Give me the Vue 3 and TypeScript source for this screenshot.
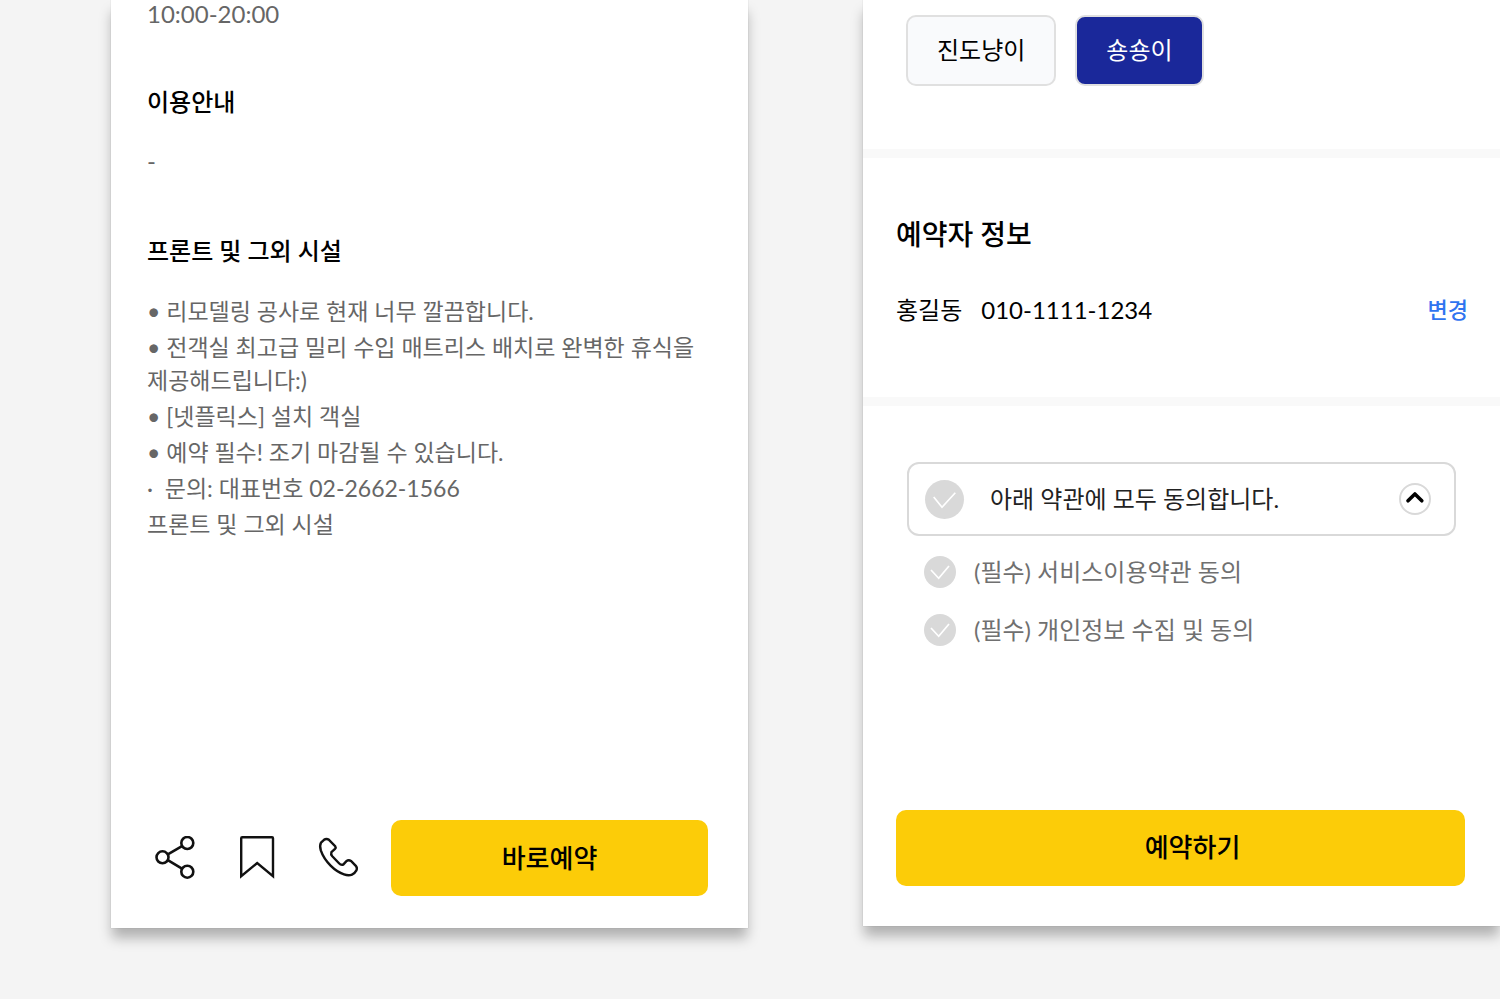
<script setup lang="ts">
import { ref } from 'vue'

interface Term {
  id: string
  label: string
}

const notices: string[] = [
  '• 리모델링 공사로 현재 너무 깔끔합니다.',
  '• 전객실 최고급 밀리 수입 매트리스 배치로 완벽한 휴식을 제공해드립니다:)',
  '• [넷플릭스] 설치 객실',
  '• 예약 필수! 조기 마감될 수 있습니다.',
  '·  문의: 대표번호 02-2662-1566',
  '프론트 및 그외 시설',
]

const pets: string[] = ['진도냥이', '숑숑이']
const selectedPet = ref('숑숑이')

const terms: Term[] = [
  { id: 'service', label: '(필수) 서비스이용약관 동의' },
  { id: 'privacy', label: '(필수) 개인정보 수집 및 동의' },
]
const agreed = ref<string[]>([])
const open = ref(true)

function toggleAll(event: Event) {
  agreed.value = (event.target as HTMLInputElement).checked ? terms.map((t) => t.id) : []
}
</script>

<template>
  <main class="page">
    <article class="card place">
      <p class="text">10:00-20:00</p>
      <h2 class="subtitle guide">이용안내</h2>
      <p class="text">-</p>
      <h2 class="subtitle front">프론트 및 그외 시설</h2>
      <ul class="notices">
        <li v-for="line in notices" :key="line">{{ line }}</li>
      </ul>
      <footer class="actions">
        <div class="icons">
          <button type="button" class="icon" aria-label="공유">
            <svg viewBox="0 0 44 44" stroke-width="2.6">
              <circle cx="9.5" cy="21.3" r="6" />
              <circle cx="34.3" cy="7" r="6" />
              <circle cx="34.3" cy="35.7" r="6" />
              <path d="M14.8 18.4 29 10.2M14.8 24.2 29 32.6" />
            </svg>
          </button>
          <button type="button" class="icon" aria-label="저장">
            <svg viewBox="0 0 44 44" stroke-width="2.4">
              <path d="M6.2 40.2V2.2Q6.2 1.2 7.2 1.2H37Q38 1.2 38 2.2V40.2L22.2 27Z" />
            </svg>
          </button>
          <button type="button" class="icon" aria-label="전화">
            <svg viewBox="0 0 44 44" stroke-width="2.4">
              <path d="M4 6.7 7 3.8Q9.4 2 12 3.8L18.2 10.2Q19.2 11.6 18 12.8L14.4 16.2Q13.6 18.4 15.3 20.3L22 27.2Q24 29.4 26.2 28.6L29.4 25.2Q31.6 23.2 34 25L38.8 29.8Q40.6 32 39.4 34.4 37.8 37.4 35 38.6 31.6 40 27 38.4 20 36 13.6 29.6 6.6 22.6 3.8 14.4 2.4 9.4 4 6.7Z" />
            </svg>
          </button>
        </div>
        <button type="button" class="primary">바로예약</button>
      </footer>
    </article>

    <article class="card booking">
      <div class="pets">
        <button
          v-for="pet in pets"
          :key="pet"
          type="button"
          class="pet"
          :class="{ selected: pet === selectedPet }"
          :aria-pressed="pet === selectedPet"
          @click="selectedPet = pet"
        >{{ pet }}</button>
      </div>
      <section class="guest">
        <h2 class="title">예약자 정보</h2>
        <div class="contact">
          <span>홍길동</span>
          <span>010-1111-1234</span>
          <button type="button" class="change">변경</button>
        </div>
      </section>
      <section class="terms">
        <div class="all">
          <label class="check large">
            <span class="mark">
              <input type="checkbox" :checked="agreed.length === terms.length" @change="toggleAll" />
              <svg viewBox="0 0 39 39" stroke-width="1.7"><path d="M8.7 17 17 27.3 30.3 12.7" /></svg>
            </span>
            <span>아래 약관에 모두 동의합니다.</span>
          </label>
          <button type="button" class="toggle" aria-label="약관 접기" :aria-expanded="open" @click="open = !open">
            <svg viewBox="0 0 28 28"><path d="M7 15.8 13.9 9 20.8 15.8" /></svg>
          </button>
        </div>
        <div v-show="open" class="list">
          <label v-for="term in terms" :key="term.id" class="check">
            <span class="mark">
              <input v-model="agreed" type="checkbox" :value="term.id" />
              <svg viewBox="0 0 32 32" stroke-width="1.7"><path d="M7 14 14.7 22.3 25 10" /></svg>
            </span>
            <span>{{ term.label }}</span>
          </label>
        </div>
      </section>
      <footer class="submit">
        <button type="button" class="primary">예약하기</button>
      </footer>
    </article>
  </main>
</template>

<style>
body {
  margin: 0;
  background: #f4f4f4;
}
</style>

<style scoped>
* {
  box-sizing: border-box;
}

.page {
  display: grid;
  grid-template-columns: 1fr 1fr;
  align-items: start;
  gap: 115px;
  min-height: 100vh;
  padding: 0 0 64px 111px;
  overflow: hidden;
  background: #f4f4f4;
  color: #000;
  font-family: Lato, "Noto Sans CJK KR", sans-serif;
  font-size: 24px;
  line-height: 33px;
}

button {
  padding: 0;
  border: 0;
  background: none;
  color: inherit;
  font: inherit;
  cursor: pointer;
}

h2,
p,
ul {
  margin: 0;
}

.card {
  min-width: 0;
  background: #fff;
  box-shadow: 0 0 1px rgba(0, 0, 0, 0.2), 0 11px 12px -1px rgba(0, 0, 0, 0.28);
}

.place {
  padding: 0 40px 32px 36px;
}

.text {
  color: #666;
  line-height: 28px;
}

.subtitle {
  font-size: 24px;
  font-weight: 500;
  line-height: 32px;
}

.guide {
  margin: 58px 0 29px;
}

.front {
  margin: 60px 0 28px;
}

.notices {
  display: grid;
  gap: 3px;
  padding: 0;
  color: #666;
  font-size: 23px;
  list-style: none;
}

.notices li {
  white-space: pre-wrap;
  word-break: keep-all;
}

.actions {
  display: flex;
  align-items: center;
  gap: 30px;
  margin-top: 279px;
}

.icons {
  display: flex;
  gap: 38px;
  padding-left: 6px;
}

.icon {
  width: 44px;
  height: 44px;
}

svg {
  display: block;
  width: 100%;
  height: 100%;
  fill: none;
  stroke: currentColor;
}

.icon svg {
  stroke: #111;
}

.primary {
  flex: 1;
  height: 76px;
  border-radius: 10px;
  background: #fccc08;
  font-size: 26px;
  font-weight: 500;
}

.booking {
  padding: 15px 0 40px;
}

.pets {
  display: flex;
  gap: 19px;
  padding: 0 43px 63px;
}

.pet {
  height: 71px;
  padding: 0 29px 2px;
  border: 2px solid #e0e0e0;
  border-radius: 10px;
  background: #f9fafc;
}

.pet.selected {
  background: #1a289a;
  color: #fff;
}

.guest {
  padding: 60px 32px 71px 33px;
  border: solid #f9f9f9;
  border-width: 9px 0;
}

.title {
  margin-bottom: 43px;
  font-size: 28px;
  font-weight: 500;
  line-height: 32px;
}

.contact {
  display: flex;
  gap: 19px;
}

.change {
  margin-left: auto;
  color: #2f74f0;
  font-size: 22px;
  font-weight: 500;
}

.terms {
  padding: 56px 44px 0;
}

.all {
  display: flex;
  align-items: center;
  justify-content: space-between;
  height: 74px;
  padding: 0 23px 0 16px;
  border: 2px solid #d9d9d9;
  border-radius: 12px;
}

.check {
  display: flex;
  align-items: center;
  gap: 18px;
  color: #707070;
  line-height: 32px;
}

.check.large {
  gap: 26px;
  color: #222;
}

.mark {
  display: grid;
  width: 32px;
  height: 32px;
}

.large .mark {
  width: 39px;
  height: 39px;
}

.mark > * {
  grid-area: 1 / 1;
}

.mark input {
  width: 100%;
  height: 100%;
  margin: 0;
  border-radius: 50%;
  background: #d9d9d9;
  appearance: none;
}

.mark input:checked {
  background: #1a289a;
}

.mark svg {
  position: relative;
  stroke: #fff;
  pointer-events: none;
}

.toggle {
  width: 32px;
  height: 32px;
  border: 2px solid #d9d9d9;
  border-radius: 50%;
}

.toggle svg {
  stroke: #000;
  stroke-width: 3.6;
  stroke-linecap: round;
  stroke-linejoin: round;
}

.list {
  display: grid;
  gap: 26px;
  padding: 20px 17px 0;
}

.submit {
  display: flex;
  padding: 164px 35px 0 33px;
}

.submit .primary {
  padding: 0 0 2px 24px;
}
</style>
